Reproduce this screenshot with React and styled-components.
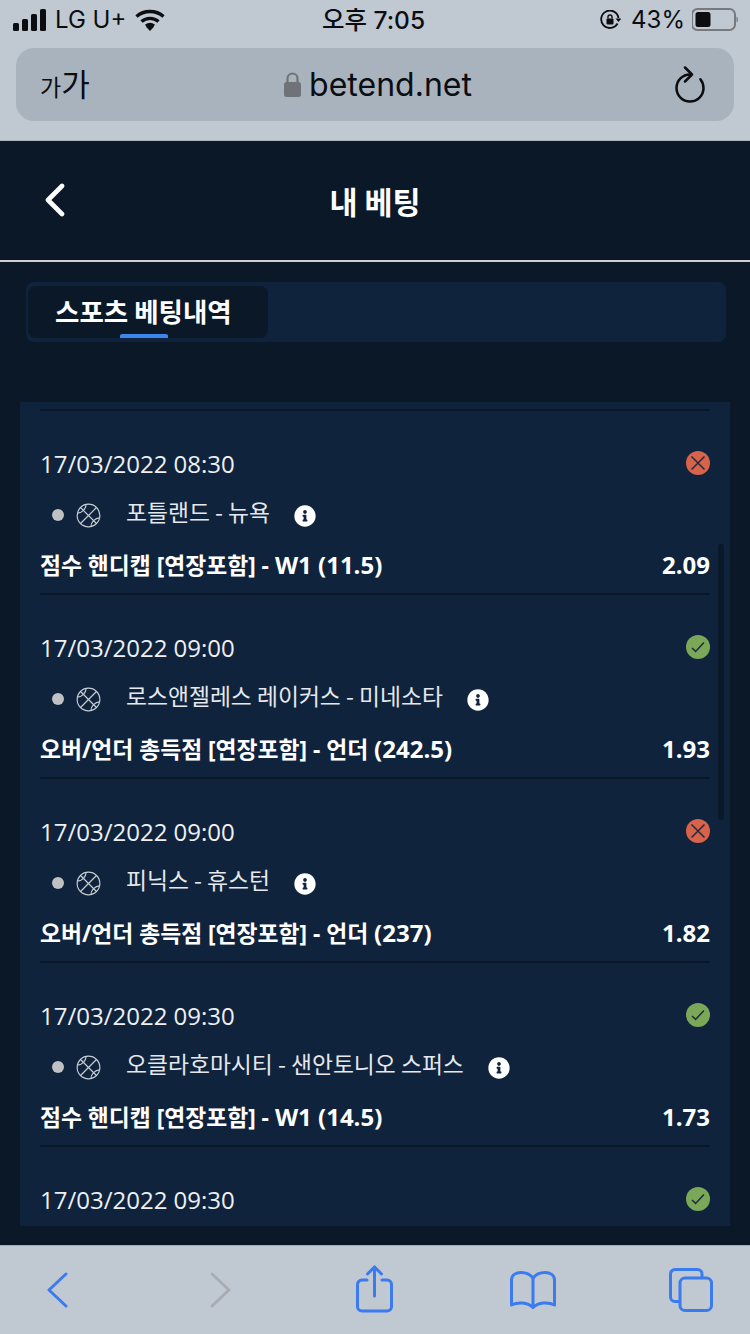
import React from 'react';
import styled, { createGlobalStyle } from 'styled-components';
import { FaInfoCircle } from 'react-icons/fa';

// Styles
const GlobalStyle = createGlobalStyle`
	html, body {
		margin: 0;
		padding: 0;
		background: #0a1828;
	}
`

const Screen = styled.div`
	width: 750px;
	height: 1334px;
	display: flex;
	flex-direction: column;
	overflow: hidden;
	font-family: "Open Sans", "Noto Sans CJK KR", sans-serif;
`

const Chrome = styled.div`
	height: 141px;
	flex: none;
	background: #c0c8d1;
	border-bottom: 1px solid #aab2bb;
	box-sizing: border-box;
`

const StatusBar = styled.div`
	box-sizing: border-box;
	padding: 0 12px 0 13px;
	display: grid;
	grid-template-columns: 1fr auto 1fr;
	align-items: center;
	height: 40px;
	margin-bottom: 8px;
	color: #0b0d10;
	font-family: Inter, "Noto Sans CJK KR", sans-serif;
	font-size: 24px;
	line-height: 28px;
`

const StatusGroup = styled.div`
	display: flex;
	align-items: center;
	gap: ${(props) => props.$gap || 8}px;
	justify-content: ${(props) => (props.$end ? 'flex-end' : 'flex-start')};
`

const Clock = styled.span`
	margin-left: -4px;
	font-weight: 500;
	font-size: 24.5px;
`

const Percent = styled.span`
	margin-left: 3px;
`

const AddressBar = styled.div`
	height: 73px;
	margin: 0 16px;
	padding: 0 18px 0 24px;
	background: #a9b3bd;
	border-radius: 18px;
	display: grid;
	grid-template-columns: 1fr auto 1fr;
	align-items: center;
	color: #0b0d10;
`

const TextSize = styled.span`
	font-family: "Noto Sans CJK KR", sans-serif;
	font-size: ${(props) => props.$size}px;
	line-height: 40px;
`

const Domain = styled.div`
	display: flex;
	align-items: center;
	gap: 8px;
	font-family: Inter, sans-serif;
	font-size: 32px;
	line-height: 40px;
`

const ReloadSlot = styled.div`
	display: flex;
	justify-content: flex-end;
	margin-right: 11px;
`

const Page = styled.div`
	flex: 1;
	display: flex;
	flex-direction: column;
	background: #0a1828;
	color: #fff;
	min-height: 0;
`

const Header = styled.div`
	height: 121px;
	flex: none;
	display: flex;
	align-items: center;
	justify-content: center;
	position: relative;
	box-sizing: border-box;
	border-bottom: 2px solid #cdcfd0;
`

const BackButton = styled.div`
	position: absolute;
	left: 44px;
	top: 42px;
	display: flex;
`

const Title = styled.h1`
	margin: 0;
	font-family: "Noto Sans CJK KR", sans-serif;
	font-size: 30.5px;
	font-weight: 700;
	line-height: 40px;
`

const TabBar = styled.div`
	height: 60px;
	margin: 20px 24px 60px 26px;
	padding: 4px 2px;
	box-sizing: border-box;
	background: #0f233d;
	border-radius: 8px;
	flex: none;
	display: flex;
`

const Tab = styled.div`
	width: 240px;
	position: relative;
	background: #0a1828;
	border-radius: 8px;
	padding-left: 27px;
	box-sizing: border-box;
	font-family: "Noto Sans CJK KR", sans-serif;
	font-size: 26.5px;
	font-weight: 700;
	line-height: 49px;

	&::after {
		content: '';
		position: absolute;
		left: 92px;
		bottom: 0;
		width: 48px;
		height: 4px;
		border-radius: 2px 2px 0 0;
		background: #3a86ee;
	}
`

const Panel = styled.div`
	height: 824px;
	margin: 0 20px;
	padding: 7px 20px 0;
	box-sizing: border-box;
	background: #0f233d;
	flex: none;
	overflow: hidden;
	position: relative;
`

const Scrollbar = styled.div`
	position: absolute;
	left: 698px;
	top: 142px;
	width: 6px;
	height: 276px;
	border-radius: 3px;
	background: #0a1828;
`

const List = styled.div`
	border-top: 2px solid #0a1828;
`

const Row = styled.div`
	height: 184px;
	box-sizing: border-box;
	padding-top: 36px;
	border-bottom: 2px solid #0a1828;
`

const DateLine = styled.div`
	display: flex;
	justify-content: space-between;
	align-items: center;
	height: 36px;
	box-sizing: border-box;
	padding-bottom: 4px;
	font-size: 24px;
	color: #eef0f2;
`

const StatusMark = styled.div`
	width: 24px;
	height: 24px;
	border-radius: 50%;
	background: ${(props) => (props.$won ? '#7ba858' : '#d9624a')};
	display: flex;
	align-items: center;
	justify-content: center;
`

const TeamLine = styled.div`
	height: 40px;
	margin-top: 12px;
	display: flex;
	align-items: center;
	padding-left: 12px;
`

const Dot = styled.span`
	width: 12px;
	height: 12px;
	border-radius: 50%;
	background: #bfc1c4;
	margin-right: 12px;
`

const Teams = styled.span`
	margin: -7px 24px 0 25px;
	font-family: "Noto Sans CJK KR", sans-serif;
	font-size: 22.8px;
	line-height: 30px;
	color: #e6e8eb;
`

const InfoIcon = styled(FaInfoCircle)`
	width: 22px;
	height: 22px;
	margin-top: 2px;
	color: #fff;
`

const MarketLine = styled.div`
	margin-top: 15px;
	height: 30px;
	display: flex;
	justify-content: space-between;
	align-items: center;
	font-size: 24px;
	font-weight: 700;
	line-height: 30px;
`

const MarketName = styled.span`
	font-size: 22.8px;
`

const BottomBar = styled.div`
	height: 89px;
	flex: none;
	background: #c0c8d1;
	border-top: 1px solid #a4adb6;
	box-sizing: border-box;
	display: grid;
	grid-template-columns: 47px 21px 142px 21px 125px 37px 117px 46px 113px 44px;
	align-items: start;
`

const BarSlot = styled.div`
	grid-column: ${(props) => props.$col};
	margin-top: ${(props) => props.$top}px;
	display: flex;
`

// Components
const SignalIcon = () => (
	<svg width="34" height="22" viewBox="0 0 34 22">
		<rect x="0" y="14" width="6" height="8" rx="1.5" fill="#0b0d10" />
		<rect x="9" y="10" width="6" height="12" rx="1.5" fill="#0b0d10" />
		<rect x="18" y="5" width="6" height="17" rx="1.5" fill="#0b0d10" />
		<rect x="27" y="0" width="6" height="22" rx="1.5" fill="#0b0d10" />
	</svg>
)

const WifiIcon = () => (
	<svg width="30" height="22" viewBox="0 0 30 22" fill="none" stroke="#0b0d10" strokeWidth="3.4">
		<path d="M1.5 7.5C9 .8 21 .8 28.5 7.5" />
		<path d="M6.5 12.5c5-4.2 12-4.2 17 0" />
		<path d="M11 17c2.4-1.8 5.6-1.8 8 0" />
		<path d="M15 22l-4-4.2c2.4-1.7 5.6-1.7 8 0z" fill="#0b0d10" stroke="none" />
	</svg>
)

const RotationLockIcon = () => (
	<svg width="21" height="20" viewBox="0 0 21 20" fill="none" stroke="#0b0d10" strokeWidth="1.8">
		<path d="M17.5 13.5A8.7 8.7 0 1 1 18.5 8" />
		<path d="M15.5 8.5h6l-3 3.6z" fill="#0b0d10" stroke="none" />
		<rect x="6.5" y="8.5" width="7" height="6" rx="1" fill="#0b0d10" stroke="none" />
		<path d="M8 8.5V7a2 2 0 0 1 4 0v1.5" strokeWidth="1.4" />
	</svg>
)

const BatteryIcon = () => (
	<svg width="46" height="24" viewBox="0 0 46 24" fill="none">
		<rect x="0" y="1" width="43" height="21" rx="5.5" stroke="#77797d" strokeWidth="2" />
		<rect x="3.5" y="4" width="15" height="15" rx="2.5" fill="#0b0d10" />
		<path d="M44.5 8.5c1 .6 1.4 1.6 1.4 3s-.4 2.4-1.4 3z" fill="#77797d" />
	</svg>
)

const LockIcon = () => (
	<svg width="17" height="25" viewBox="0 0 17 25" fill="none">
		<path d="M3.5 11V6.5a5 5 0 0 1 10 0V11" stroke="#6f7379" strokeWidth="2.2" />
		<rect x="0" y="10" width="17" height="15" rx="2.5" fill="#6f7379" />
	</svg>
)

const ReloadIcon = () => (
	<svg width="30" height="37" viewBox="0 0 30 37" fill="none" stroke="#0b0d10" strokeWidth="2.5" strokeLinecap="round" strokeLinejoin="round">
		<path d="M15 8.5C7.500 8.500 1.500 14.500 1.500 22a13.500 13.500 0 0 0 27 0c0-3.300-1.200-6.300-3.100-8.700" />
		<path d="M10 1.500l7 7-7 7" />
	</svg>
)

const ChevronBack = () => (
	<svg width="22" height="34" viewBox="0 0 22 34" fill="none" stroke="#fff" strokeWidth="4.6" strokeLinecap="round" strokeLinejoin="round">
		<path d="M18 3L4 17l14 14" />
	</svg>
)

const Basketball = () => (
	<svg width="25" height="25" viewBox="0 0 26 26" fill="none" stroke="#c9ced4" strokeWidth="1.2">
		<circle cx="13" cy="13" r="11.8" />
		<path d="M4.7 4.7l16.6 16.6" />
		<path d="M21.3 4.7L4.7 21.3" />
		<path d="M1.6 10.5C6 10.500 10.500 6 10.500 1.600" />
		<path d="M15.500 24.400C15.500 20 20 15.500 24.400 15.500" />
	</svg>
)

const CrossMark = () => (
	<svg width="16" height="16" viewBox="0 0 16 16" stroke="#1d2c3f" strokeWidth="1.5" fill="none">
		<path d="M1.5 1.5l13 13M14.5 1.5l-13 13" />
	</svg>
)

const CheckMark = () => (
	<svg width="14" height="12" viewBox="0 0 14 12" stroke="#1d2c3f" strokeWidth="1.5" fill="none">
		<path d="M1 7l3.6 3.4L13 1.5" />
	</svg>
)

const NavChevron = ({color, flip}) => (
	<svg width="21" height="36" viewBox="0 0 21 36" fill="none" stroke={color} strokeWidth="3" strokeLinecap="round" strokeLinejoin="round">
		<path d={flip ? 'M2 2l17 16L2 34' : 'M19 2L2 18l17 16'} />
	</svg>
)

const ShareIcon = () => (
	<svg width="37" height="48" viewBox="0 0 37 48" fill="none" stroke="#3a7bf0" strokeWidth="3" strokeLinecap="round" strokeLinejoin="round">
		<path d="M11 15H6a4.5 4.5 0 0 0-4.5 4.5v22A4.5 4.5 0 0 0 6 46h25a4.5 4.5 0 0 0 4.5-4.5v-22A4.5 4.5 0 0 0 31 15h-5" />
		<path d="M18.5 31V2" />
		<path d="M11.5 9l7-7 7 7" />
	</svg>
)

const BookIcon = () => (
	<svg width="46" height="38" viewBox="0 0 46 38" fill="none" stroke="#3a7bf0" strokeWidth="3" strokeLinecap="round" strokeLinejoin="round">
		<path d="M23 7C20 3 16 1.5 11 1.5 6 1.5 1.5 4 1.5 9v25c6-3 16-3 21.500 2.500C28.500 31 38.500 31 44.500 34V9c0-5-4.500-7.500-9.500-7.500C30 1.500 26 3 23 7z" />
		<path d="M23 7v29" />
	</svg>
)

const TabsIcon = () => (
	<svg width="44" height="44" viewBox="0 0 44 44" fill="none" stroke="#3a7bf0" strokeWidth="3" strokeLinejoin="round">
		<path d="M33 9V6a4.500 4.500 0 0 0-4.500-4.500H6A4.500 4.500 0 0 0 1.500 6v23A4.500 4.500 0 0 0 6 33.500h4" />
		<rect x="11" y="10" width="31.500" height="32.500" rx="5" />
	</svg>
)

// name is the Korean part of the market, value the tail that sits in the latin font
const bets = [
	{ id: 1, date: '17/03/2022 08:30', teams: '포틀랜드 - 뉴욕', name: '점수 핸디캡 [연장포함] - ', value: 'W1 (11.5)', odds: '2.09', won: false },
	{ id: 2, date: '17/03/2022 09:00', teams: '로스앤젤레스 레이커스 - 미네소타', name: '오버/언더 총득점 [연장포함] - 언더 ', value: '(242.5)', odds: '1.93', won: true },
	{ id: 3, date: '17/03/2022 09:00', teams: '피닉스 - 휴스턴', name: '오버/언더 총득점 [연장포함] - 언더 ', value: '(237)', odds: '1.82', won: false },
	{ id: 4, date: '17/03/2022 09:30', teams: '오클라호마시티 - 샌안토니오 스퍼스', name: '점수 핸디캡 [연장포함] - ', value: 'W1 (14.5)', odds: '1.73', won: true },
	{ id: 5, date: '17/03/2022 09:30', teams: '', name: '', value: '', odds: '', won: true },
]

const App = () => {
	return (
		<Screen>
			<GlobalStyle />
			<Chrome>
				<StatusBar>
					<StatusGroup>
						<SignalIcon />
						<StatusGroup $gap={9}>
							<span>LG U+</span>
							<WifiIcon />
						</StatusGroup>
					</StatusGroup>
					<Clock>오후 7:05</Clock>
					<StatusGroup $end $gap={7}>
						<RotationLockIcon />
						<Percent>43%</Percent>
						<BatteryIcon />
					</StatusGroup>
				</StatusBar>
				<AddressBar>
					<div>
						<TextSize $size={23}>가</TextSize>
						<TextSize $size={31}>가</TextSize>
					</div>
					<Domain>
						<LockIcon />
						betend.net
					</Domain>
					<ReloadSlot>
						<ReloadIcon />
					</ReloadSlot>
				</AddressBar>
			</Chrome>
			<Page>
				<Header>
					<BackButton>
						<ChevronBack />
					</BackButton>
					<Title>내 베팅</Title>
				</Header>
				<TabBar>
					<Tab>스포츠 베팅내역</Tab>
				</TabBar>
				<Panel>
					<List>
						{bets.map((bet) => (
							<Row key={bet.id}>
								<DateLine>
									{bet.date}
									<StatusMark $won={bet.won}>
										{bet.won ? <CheckMark /> : <CrossMark />}
									</StatusMark>
								</DateLine>
								<TeamLine>
									<Dot />
									<Basketball />
									<Teams>{bet.teams}</Teams>
									<InfoIcon />
								</TeamLine>
								<MarketLine>
									<span><MarketName>{bet.name}</MarketName>{bet.value}</span>
									<span>{bet.odds}</span>
								</MarketLine>
							</Row>
						))}
					</List>
					<Scrollbar />
				</Panel>
			</Page>
			<BottomBar>
				<BarSlot $col={2} $top={26}><NavChevron color="#3a7bf0" /></BarSlot>
				<BarSlot $col={4} $top={26}><NavChevron color="#a9adb2" flip /></BarSlot>
				<BarSlot $col={6} $top={19}><ShareIcon /></BarSlot>
				<BarSlot $col={8} $top={25}><BookIcon /></BarSlot>
				<BarSlot $col={10} $top={22}><TabsIcon /></BarSlot>
			</BottomBar>
		</Screen>
	)
}

export default App
